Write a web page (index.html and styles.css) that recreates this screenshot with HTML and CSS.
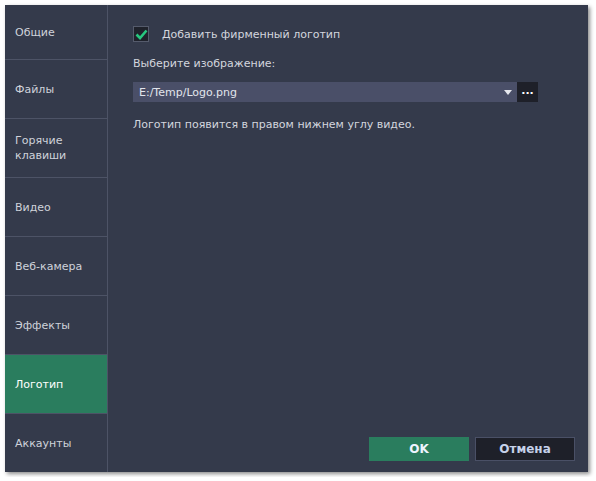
FILE: index.html
```html
<!DOCTYPE html>
<html lang="ru">
<head>
<meta charset="utf-8">
<title>Логотип</title>
<link rel="stylesheet" href="styles.css">
</head>
<body>
<div class="dialog">
  <nav class="sidebar">
    <div class="item first">Общие</div>
    <div class="item">Файлы</div>
    <div class="item">Горячие<br>клавиши</div>
    <div class="item">Видео</div>
    <div class="item">Веб-камера</div>
    <div class="item">Эффекты</div>
    <div class="item active">Логотип</div>
    <div class="item last">Аккаунты</div>
  </nav>
  <main class="content">
    <label class="check-row">
      <span class="checkbox">
        <svg width="13" height="11" viewBox="0 0 13 11"><path d="M1.5 5.5 L5 9 L11.5 1.5" fill="none" stroke="#27c77f" stroke-width="2.6"/></svg>
      </span>
      <span class="check-label">Добавить фирменный логотип</span>
    </label>
    <div class="caption">Выберите изображение:</div>
    <div class="file-row">
      <div class="select">
        <span class="select-text">E:/Temp/Logo.png</span>
        <span class="arrow"></span>
      </div>
      <div class="browse">...</div>
    </div>
    <div class="note">Логотип появится в правом нижнем углу видео.</div>
    <div class="buttons">
      <button class="btn ok">OK</button>
      <button class="btn cancel">Отмена</button>
    </div>
  </main>
</div>
</body>
</html>
```
FILE: styles.css
```css
html, body {
  margin: 0;
  padding: 0;
  background: #ffffff;
}
body {
  padding: 5px;
  font-family: "DejaVu Sans", sans-serif;
  font-size: 11px;
  color: #d3d6de;
}
.dialog {
  width: 583px;
  height: 467px;
  display: flex;
  background: #343a4b;
  box-shadow: 2px 2px 4px rgba(0, 0, 0, 0.45);
}
.sidebar {
  width: 102px;
  border-right: 1px solid #4d5366;
  display: flex;
  flex-direction: column;
}
.item {
  height: 58px;
  border-bottom: 1px solid #4d5366;
  display: flex;
  align-items: center;
  padding-left: 10px;
  line-height: 15px;
  color: #cfd2da;
  flex-shrink: 0;
}
.item.first {
  height: 54px;
}
.item.active {
  background: #2a7d5e;
  color: #ffffff;
}
.item.last {
  border-bottom: none;
  flex: 1;
}
.content {
  flex: 1;
  display: flex;
  flex-direction: column;
  padding: 21px 13px 11px 25px;
}
.check-row {
  display: flex;
  align-items: center;
  height: 16px;
}
.checkbox {
  width: 14px;
  height: 14px;
  border: 1px solid #555b6c;
  background: #1f222b;
  display: flex;
  align-items: center;
  justify-content: center;
}
.check-label {
  margin-left: 13px;
}
.caption {
  margin-top: 14px;
  height: 16px;
  line-height: 16px;
}
.file-row {
  margin-top: 10px;
  display: flex;
  height: 20px;
}
.select {
  width: 384px;
  background: #4a4f68;
  display: flex;
  align-items: center;
  justify-content: space-between;
  padding: 0 5px 0 6px;
  box-sizing: border-box;
  color: #e2e5ec;
}
.arrow {
  width: 0;
  height: 0;
  border-left: 4px solid transparent;
  border-right: 4px solid transparent;
  border-top: 5px solid #e6e8ee;
}
.browse {
  width: 21px;
  background: #1e2029;
  color: #ffffff;
  font-weight: bold;
  text-align: center;
  line-height: 17px;
}
.note {
  margin-top: 15px;
  height: 16px;
  line-height: 16px;
}
.buttons {
  margin-top: auto;
  display: flex;
  justify-content: flex-end;
  gap: 6px;
}
.btn {
  width: 100px;
  height: 24px;
  font-family: "DejaVu Sans", sans-serif;
  font-size: 12px;
  font-weight: bold;
  border: none;
  padding: 0;
}
.ok {
  background: #2a7d5e;
  color: #eef4ff;
}
.cancel {
  background: #1e2029;
  border: 1px solid #4a5066;
  color: #c6d2ea;
}
```
